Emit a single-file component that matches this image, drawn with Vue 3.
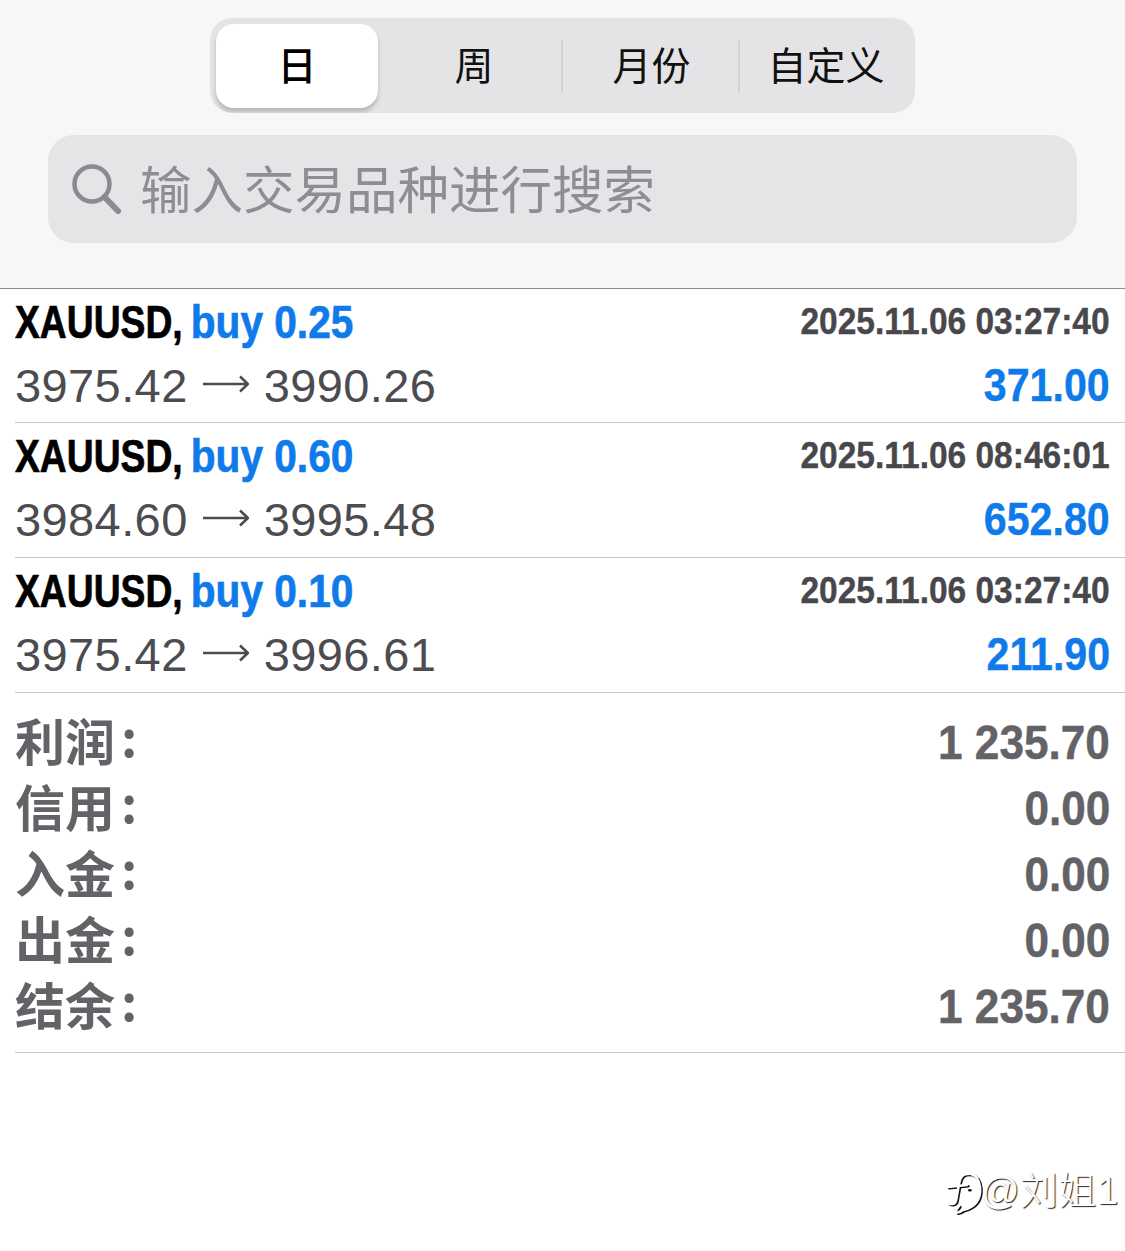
<template>
  <div class="page">
    <div class="head">
      <div class="seg">
        <div v-for="(t, i) in tabs" :key="t.label" class="seg-item" :class="{ on: i == 0, line: i > 1 }" :style="{ width: t.w + 'px' }"><span>{{ t.label }}</span></div>
      </div>
      <div class="search">
        <svg class="search-icon" width="52" height="52" viewBox="0 0 52 52">
          <circle cx="21" cy="21" r="17.5" fill="none" stroke="#8b8b8f" stroke-width="4.5"/>
          <path d="M33.5 34 L47 48" fill="none" stroke="#8b8b8f" stroke-width="6" stroke-linecap="round"/>
        </svg>
        <span class="hint">输入交易品种进行搜索</span>
      </div>
    </div>

    <div class="list">
      <div v-for="o in orders" :key="o.price" class="order">
        <div class="order-row">
          <span class="name"><b>XAUUSD,</b> <i>buy {{ o.lot }}</i></span>
          <span class="time">{{ o.time }}</span>
        </div>
        <div class="order-row second">
          <span class="price">
            {{ o.open }}
            <svg class="arrow" width="46" height="20" viewBox="0 0 46 20">
              <path d="M0 10 H45 M37 2.5 L45 10 L37 17.5" fill="none" stroke="#4c4c50" stroke-width="2.6"/>
            </svg>
            {{ o.price }}
          </span>
          <span class="profit">{{ o.profit }}</span>
        </div>
      </div>
    </div>

    <div class="summary">
      <div v-for="s in summary" :key="s.label" class="sum-row">
        <span class="sum-label">{{ s.label }}<u>:</u></span>
        <span class="sum-value">{{ s.value }}</span>
      </div>
    </div>

    <div class="mark">
      <svg width="40" height="48" viewBox="0 0 40 48">
        <g fill="none" stroke-linecap="round">
          <g stroke="#111" stroke-width="2.6" transform="translate(1.4 1.2)">
            <path d="M14 37 C9 43 11 46 18 41 C30 38 36 30 35 18 C34 10 30 6 26 5"/>
            <path d="M24 5 C18 4 15 8 14 15 L11 32 C10 35 7 36 3 34"/>
            <path d="M3 18 L22 16"/>
            <path d="M23 20 L24 20"/>
          </g>
          <g stroke="#fff" stroke-width="2.6">
            <path d="M14 37 C9 43 11 46 18 41 C30 38 36 30 35 18 C34 10 30 6 26 5"/>
            <path d="M24 5 C18 4 15 8 14 15 L11 32 C10 35 7 36 3 34"/>
            <path d="M3 18 L22 16"/>
          </g>
        </g>
      </svg>
      <span class="mark-text">@刘姐1</span>
    </div>
  </div>
</template>

<script setup>
const tabs = [
  { label: "日", w: 162 },
  { label: "周", w: 184 },
  { label: "月份", w: 177 },
  { label: "自定义", w: 170 }
];

const orders = [
  { lot: "0.25", time: "2025.11.06 03:27:40", open: "3975.42", price: "3990.26", profit: "371.00" },
  { lot: "0.60", time: "2025.11.06 08:46:01", open: "3984.60", price: "3995.48", profit: "652.80" },
  { lot: "0.10", time: "2025.11.06 03:27:40", open: "3975.42", price: "3996.61", profit: "211.90" }
];

const summary = [
  { label: "利润", value: "1 235.70" },
  { label: "信用", value: "0.00" },
  { label: "入金", value: "0.00" },
  { label: "出金", value: "0.00" },
  { label: "结余", value: "1 235.70" }
];
</script>

<style>
html, body { margin: 0; background: #fff; }
</style>

<style scoped>
.page {
  position: relative;
  width: 1125px;
  height: 1251px;
  overflow: hidden;
  background: #fff;
  font-family: "Liberation Sans", "Noto Sans CJK SC", sans-serif;
}
.head {
  height: 270px;
  padding-top: 18px;
  background: #f7f7f7;
  border-bottom: 1px solid #8e8e8e;
}
.seg {
  display: flex;
  width: 693px;
  height: 84px;
  margin-left: 210px;
  padding: 6px 6px 5px;
  border-radius: 22px;
  background: #e4e4e6;
  overflow: hidden;
}
.seg-item {
  position: relative;
  display: flex;
  align-items: center;
  justify-content: center;
  font-size: 39px;
  color: #111;
  font-family: "Noto Sans CJK SC", sans-serif;
}
.seg-item span {
  margin-top: -6px;
}
.seg-item:nth-child(2) span {
  margin-left: 8px;
}
.seg-item:nth-child(3) span {
  margin-left: 2px;
}
.seg-item:nth-child(4) span {
  margin-left: 4px;
}
.seg-item.on {
  background: #fff;
  border-radius: 18px;
  font-weight: 500;
  color: #000;
  box-shadow: 0 4px 4px rgba(0, 0, 0, 0.2);
}
.seg-item.line::before {
  content: "";
  position: absolute;
  left: -1px;
  top: 16px;
  bottom: 15px;
  width: 2px;
  background: #d2d2d4;
}
.search {
  display: flex;
  align-items: center;
  width: 1029px;
  height: 108px;
  margin: 22px 0 0 48px;
  border-radius: 26px;
  background: #e5e5e8;
}
.search-icon {
  margin-left: 23px;
}
.hint {
  margin: -4px 0 0 17px;
  font-size: 51.5px;
  line-height: 1;
  color: #8e8e92;
  font-family: "Noto Sans CJK SC", sans-serif;
}
.list {
  padding-left: 15px;
}
.order {
  height: 134px;
  box-sizing: border-box;
  border-bottom: 1px solid #c6c6c8;
}
.order + .order {
  height: 135px;
}
.order-row {
  display: flex;
  align-items: center;
  justify-content: space-between;
  height: 66px;
  padding-right: 15px;
}
.order-row.second {
  height: 60px;
}
.name {
  display: inline-block;
  font-size: 46px;
  font-weight: 700;
  color: #000;
  white-space: nowrap;
  -webkit-text-stroke: 0.7px currentColor;
  transform: scaleX(0.81);
  transform-origin: left center;
}
.name b {
  font-weight: 700;
}
.name i {
  display: inline-block;
  margin-left: -2.5px;
  font-style: normal;
  color: #0f7bea;
  transform: scaleX(1.09);
  transform-origin: left center;
}
.time {
  display: inline-block;
  font-size: 37px;
  font-weight: 700;
  color: #48484c;
  white-space: nowrap;
  -webkit-text-stroke: 0.4px currentColor;
  transform: scaleX(0.905);
  transform-origin: right center;
}
.price {
  display: flex;
  align-items: center;
  gap: 15px;
  font-size: 47px;
  letter-spacing: 0.4px;
  color: #4c4c50;
  white-space: nowrap;
}
.arrow {
  margin-top: -2px;
}
.profit {
  display: inline-block;
  font-size: 46px;
  font-weight: 700;
  color: #0f7bea;
  -webkit-text-stroke: 0.4px currentColor;
  transform: scaleX(0.895);
  transform-origin: right center;
}
.summary {
  height: 360px;
  box-sizing: border-box;
  margin-left: 15px;
  padding: 17px 15px 0 0;
  border-bottom: 1px solid #c6c6c8;
}
.sum-row {
  display: flex;
  align-items: center;
  justify-content: space-between;
  height: 66px;
  color: #636367;
  font-weight: 700;
}
.sum-label {
  margin-top: -8px;
  font-size: 50px;
  line-height: 1;
  font-family: "Noto Sans CJK SC", sans-serif;
}
.sum-label u {
  display: inline-block;
  margin-left: 6px;
  text-decoration: none;
  transform: translateY(-4px);
}
.sum-value {
  display: inline-block;
  margin-top: -2px;
  font-size: 49px;
  white-space: nowrap;
  -webkit-text-stroke: 0.5px currentColor;
  transform: scaleX(0.9);
  transform-origin: right center;
}
.mark {
  position: absolute;
  left: 945px;
  top: 1169px;
  display: flex;
  align-items: center;
  color: #fff;
  white-space: nowrap;
}
.mark-text {
  margin: -12px 0 0 -4px;
  font-size: 38px;
  letter-spacing: 0.5px;
  font-weight: 300;
  text-shadow: 1px 1px 1px #222;
  font-family: "Liberation Sans", "Noto Sans CJK SC", sans-serif;
}
</style>
